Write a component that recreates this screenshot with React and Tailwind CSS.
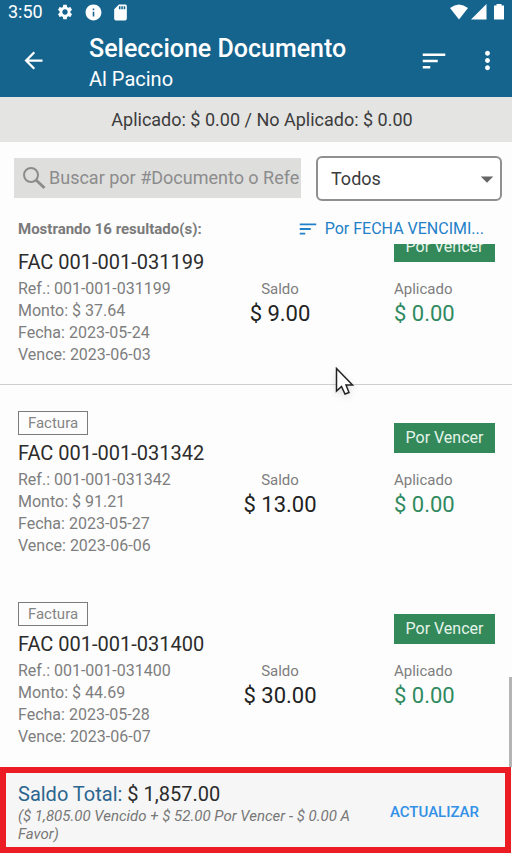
import { MdArrowBack, MdArrowDropDown, MdInfo, MdMoreVert, MdSdCard, MdSettings, MdSort } from 'react-icons/md';

const documents = [
  { id: '001-001-031199', amount: '37.64', date: '2023-05-24', due: '2023-06-03', balance: '9.00', divider: true },
  { id: '001-001-031342', amount: '91.21', date: '2023-05-27', due: '2023-06-06', balance: '13.00' },
  { id: '001-001-031400', amount: '44.69', date: '2023-05-28', due: '2023-06-07', balance: '30.00' },
];

function StatusBar() {
  return (
    <div className="flex h-6 items-center justify-between pl-2 pr-1.5">
      <div className="flex items-center">
        <span className="w-12 text-lg leading-6">3:50</span>
        <MdSettings size={18} />
        <MdInfo size={19} className="ml-2.5" />
        <MdSdCard size={19} className="ml-2" />
      </div>
      <div className="flex items-center gap-[3px]">
        <svg width="18" height="16" viewBox="0 0 18 16" fill="currentColor">
          <path d="M0 4Q9-3 18 4L9 15.500Z" />
        </svg>
        <svg width="16" height="16" viewBox="0 0 16 16" fill="currentColor">
          <path d="M0 15.500L15.500 0V15.500Z" />
        </svg>
        <svg width="16" height="16" viewBox="0 0 16 16" fill="currentColor">
          <path d="M4 1.500H6.500V0H11.500V1.500H14V15.500H4Z" />
        </svg>
      </div>
    </div>
  );
}

function Header() {
  return (
    <header className="bg-[#15648e] text-white">
      <StatusBar />
      <div className="flex h-[73px] items-center pl-5 pr-2.5">
        <button aria-label="Volver" className="w-[69px]">
          <MdArrowBack size={27} />
        </button>
        <div className="flex-1 whitespace-nowrap pt-1">
          <h1 className="text-[25px] font-medium leading-8">Seleccione Documento</h1>
          <p className="text-xl leading-7">Al Pacino</p>
        </div>
        <button aria-label="Ordenar" className="mr-6">
          <MdSort size={30} />
        </button>
        <button aria-label="Más opciones">
          <MdMoreVert size={29} />
        </button>
      </div>
    </header>
  );
}

function Filters() {
  return (
    <div className="flex items-start gap-[15px] px-3.5 pr-2.5 pt-3.5">
      <label className="mt-0.5 flex h-10 min-w-0 flex-1 items-center bg-[#dededd] pl-2 text-[#8c8c8c]">
        <svg width="24" height="24" viewBox="0 0 24 24" fill="none" stroke="currentColor" className="shrink-0">
          <circle cx="9" cy="9" r="7" strokeWidth="2" />
          <path d="M14 14L22.500 22" strokeWidth="3" />
        </svg>
        <input
          type="text"
          aria-label="Buscar"
          placeholder="Buscar por #Documento o Refe"
          className="ml-[3px] min-w-0 flex-1 bg-transparent text-lg outline-none placeholder:text-[#8c8c8c]"
        />
      </label>
      <div className="relative w-[186px]">
        <select
          aria-label="Estado"
          className="h-[45px] w-full appearance-none rounded-md border-2 border-[#8f8f8f] bg-white pl-[13px] text-lg text-[#3c3c3c]"
        >
          <option>Todos</option>
        </select>
        <MdArrowDropDown size={30} className="pointer-events-none absolute right-0 top-2 text-[#666]" />
      </div>
    </div>
  );
}

function DocumentRow({ doc }) {
  return (
    <li className={`shrink-0 border-b pb-[18px] pl-[18px] pr-[17px] pt-[26px] ${doc.divider ? 'border-[#cfcfcf]' : 'border-transparent'}`}>
      <div className="flex items-start justify-between">
        <div>
          <span className="block h-6 w-[70px] border border-[#7c7c7c] text-center text-[15px] leading-[22px] text-[#858585]">Factura</span>
          <h2 className="mt-1 text-xl leading-[29px] text-[#2c2c2c]">FAC {doc.id}</h2>
        </div>
        <span className="mt-3 h-[30px] w-[101px] bg-[#33895a] text-center text-base leading-[30px] text-[#e6f5ea]">Por Vencer</span>
      </div>
      <div className="mt-px flex text-base leading-[22px] text-[#7e7e7e]">
        <div className="w-[148px] whitespace-nowrap">
          <p>Ref.: {doc.id}</p>
          <p>Monto: $ {doc.amount}</p>
          <p>Fecha: {doc.date}</p>
          <p>Vence: {doc.due}</p>
        </div>
        <div className="flex-1 text-center">
          <p className="text-[15px]">Saldo</p>
          <p className="text-[22px] leading-7 text-[#222]">$ {doc.balance}</p>
        </div>
        <div className="w-[101px]">
          <p className="text-[15px]">Aplicado</p>
          <p className="text-[22px] leading-7 text-[#2f8a60]">$ 0.00</p>
        </div>
      </div>
    </li>
  );
}

export default function App() {
  return (
    <div className="flex h-screen flex-col bg-[#fdfdfd] pb-px font-['Roboto',sans-serif]">
      <Header />
      <p className="bg-[#e4e4e3] pl-3 text-center text-lg leading-[45px] text-[#3c3c3c]">Aplicado: $ 0.00 / No Aplicado: $ 0.00</p>
      <Filters />
      <div className="mt-4 flex h-[27px] items-start justify-between pl-[18px] pr-7">
        <span className="text-[15px] font-bold leading-6 text-[#7a7a7a]">Mostrando 16 resultado(s):</span>
        <button className="flex items-center gap-1.5 text-[#2280c8]">
          <MdSort size={22} />
          <span className="text-base leading-6">Por FECHA VENCIMI...</span>
        </button>
      </div>
      <main className="relative min-h-0 flex-1">
        <ul className="flex h-full flex-col justify-end overflow-hidden">
          {documents.map((doc) => (
            <DocumentRow key={doc.id} doc={doc} />
          ))}
        </ul>
        {/* Scroll thumb */}
        <div className="absolute bottom-0 right-0 h-[90px] w-[3px] bg-[#b4b4b4]" />
        {/* Mouse pointer */}
        <svg width="20" height="30" viewBox="0 0 20 30" className="absolute left-[335px] top-[123px] drop-shadow-md">
          <path d="M1.500 1.500V24L6.500 19.500L10 27L14 25.500L11 18H17.500Z" fill="#fff" stroke="#222" strokeWidth="1.500" />
        </svg>
      </main>
      <footer className="mr-px flex h-[86px] items-center border-6 border-[#ec1c24] bg-[#f6f6f6] pl-3 pr-[26px] pt-1">
        <div className="flex-1">
          <p className="text-xl leading-[26px] text-[#2b2b2b]">
            <span className="text-[#2c668f]">Saldo Total:</span> $ 1,857.00
          </p>
          <p className="text-[15px] italic leading-[18px] text-[#777]">($ 1,805.00 Vencido + $ 52.00 Por Vencer - $ 0.00 A Favor)</p>
        </div>
        <button className="ml-6 text-[15px] font-medium text-[#3290e6]">ACTUALIZAR</button>
      </footer>
    </div>
  );
}
